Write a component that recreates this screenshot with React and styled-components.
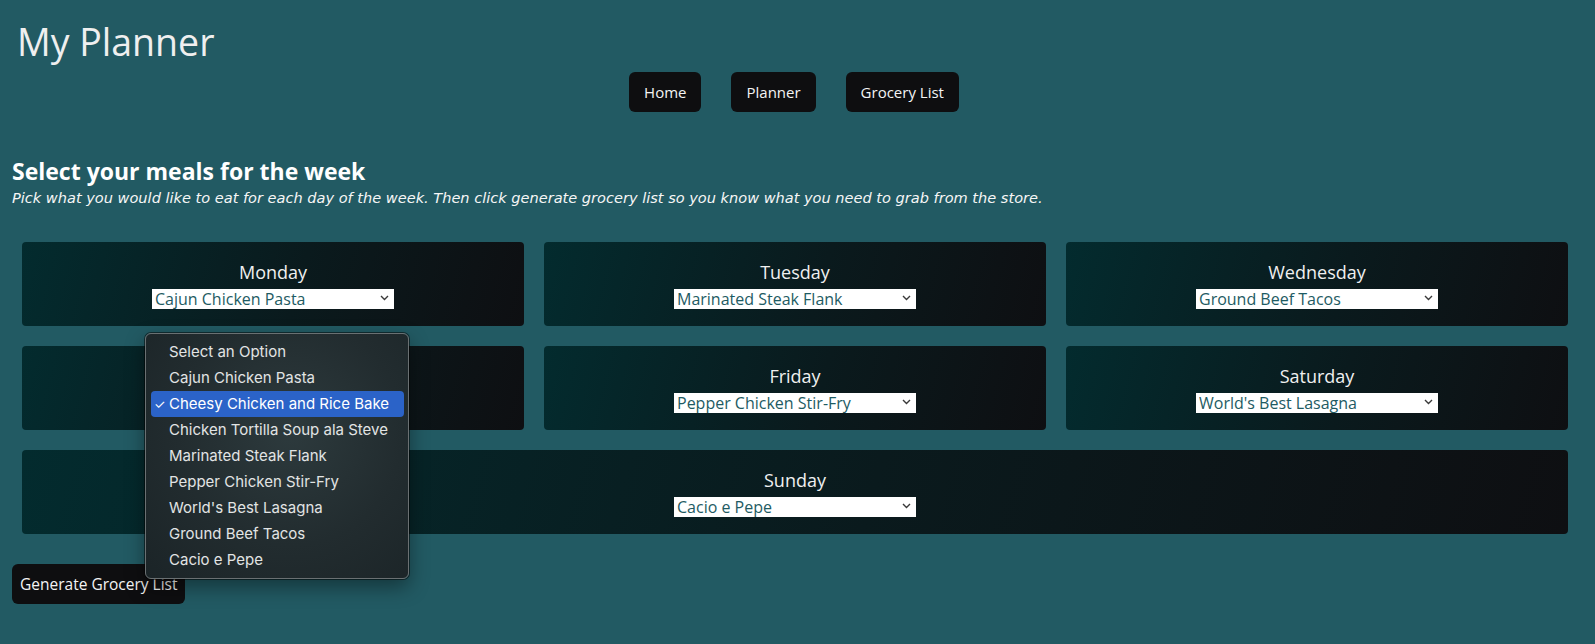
import React from "react"
import styled, { createGlobalStyle } from "styled-components"

const GlobalStyle = createGlobalStyle`
  html, body {
    margin: 0;
    padding: 0;
    background: #225a63;
  }
  body {
    font-family: "Open Sans", "DejaVu Sans", sans-serif;
    color: #f2f2f2;
  }
`

const Page = styled.div`
  position: relative;
  min-height: 644px;
  padding: 18px 12px 0 12px;
  box-sizing: border-box;
`

const Title = styled.h1`
  margin: 0 0 0 5px;
  font-size: 37.5px;
  line-height: 48px;
  font-weight: 400;
  color: #efefef;
`

const Nav = styled.nav`
  display: flex;
  justify-content: center;
  gap: 30px;
  margin-top: 6px;
  padding-right: 7px;
`

const DarkButton = styled.button`
  height: 40px;
  padding: 0 ${props => props.$pad || 15}px;
  border: none;
  border-radius: 6px;
  background: #0e0e10;
  color: #f4f4f4;
  font-family: inherit;
  font-size: ${props => props.$size || 15}px;
  cursor: pointer;
`

const Heading = styled.h2`
  margin: 44px 0 0;
  font-size: 23px;
  line-height: 30px;
  font-weight: 700;
  color: #ffffff;
`

const Subtitle = styled.p`
  margin: 2px 0 0;
  font-family: "DejaVu Sans", sans-serif;
  font-size: 14.55px;
  line-height: 20px;
  font-style: italic;
  color: #f6f6f6;
`

const Grid = styled.div`
  display: grid;
  grid-template-columns: repeat(3, 1fr);
  gap: 20px;
  margin: 34px 15px 0 10px;
`

const Card = styled.div`
  position: relative;
  grid-column: ${props => props.$wide ? "1 / -1" : "auto"};
  display: flex;
  flex-direction: column;
  align-items: center;
  padding: 18px 0 18px;
  border-radius: 4px;
  background: linear-gradient(105deg, #032b2e 0%, #0a1a1d 55%, #0e0f12 100%);
`

const DayLabel = styled.div`
  font-size: 18px;
  line-height: 24px;
  color: #f0f0f0;
`

const SelectWrap = styled.div`
  position: relative;
  width: 242px;
  height: 20px;
  margin-top: 4px;
`

const Select = styled.select`
  appearance: none;
  width: 100%;
  height: 20px;
  margin: 0;
  padding: 0 0 0 3px;
  border: none;
  border-radius: 0;
  background: #ffffff;
  color: #1e5b63;
  font-family: inherit;
  font-size: 16px;
  line-height: 20px;
  outline: none;
`

const Chevron = styled.svg`
  position: absolute;
  right: 5px;
  top: 7px;
  pointer-events: none;
`

const Popup = styled.div`
  position: absolute;
  left: -7px;
  top: -59px;
  width: 264px;
  padding: 5px 4px 5px 5px;
  box-sizing: border-box;
  border: 1px solid #6a7072;
  border-radius: 6px;
  background: radial-gradient(ellipse at 55% 40%, #2d3a3d 0%, #222c2f 55%, #1b2427 100%);
  box-shadow: 0 0 0 1px rgba(0, 0, 0, 0.5), 0 8px 20px rgba(0, 0, 0, 0.4);
  z-index: 10;
`

const Option = styled.div`
  position: relative;
  height: 26px;
  padding-left: 18px;
  border-radius: 4px;
  background: ${props => props.$active ? "#2b63c8" : "transparent"};
  color: ${props => props.$active ? "#ffffff" : "#e2e4e4"};
  font-family: "Inter", "Liberation Sans", sans-serif;
  font-size: 15px;
  line-height: 26px;
  white-space: nowrap;
`

const Check = styled.span`
  position: absolute;
  left: 3px;
  top: 0;
  font-size: 13px;
`

const Footer = styled.div`
  margin-top: 30px;
`

const meals = [
  "Select an Option",
  "Cajun Chicken Pasta",
  "Cheesy Chicken and Rice Bake",
  "Chicken Tortilla Soup ala Steve",
  "Marinated Steak Flank",
  "Pepper Chicken Stir-Fry",
  "World's Best Lasagna",
  "Ground Beef Tacos",
  "Cacio e Pepe",
]

const week = [
  { day: "Monday", meal: "Cajun Chicken Pasta" },
  { day: "Tuesday", meal: "Marinated Steak Flank" },
  { day: "Wednesday", meal: "Ground Beef Tacos" },
  { day: "Thursday", meal: "Cheesy Chicken and Rice Bake", open: true },
  { day: "Friday", meal: "Pepper Chicken Stir-Fry" },
  { day: "Saturday", meal: "World's Best Lasagna" },
  { day: "Sunday", meal: "Cacio e Pepe", wide: true },
]

function MealSelect({ value, open }) {
  return (
    <SelectWrap>
      <Select defaultValue={value}>
        {meals.map(m => <option key={m} value={m}>{m}</option>)}
      </Select>
      <Chevron width="9" height="6" viewBox="0 0 9 6">
        <path d="M1 1l3.5 3.5L8 1" fill="none" stroke="#3a3a3a" strokeWidth="1.4" />
      </Chevron>
      {open && (
        <Popup>
          {meals.map(m => (
            <Option key={m} $active={m === value}>
              {m === value && <Check>✓</Check>}
              {m}
            </Option>
          ))}
        </Popup>
      )}
    </SelectWrap>
  )
}

export default function App() {
  return (
    <>
      <GlobalStyle />
      <Page>
        <Title>My Planner</Title>
        <Nav>
          <DarkButton>Home</DarkButton>
          <DarkButton>Planner</DarkButton>
          <DarkButton>Grocery List</DarkButton>
        </Nav>
        <Heading>Select your meals for the week</Heading>
        <Subtitle>Pick what you would like to eat for each day of the week. Then click generate grocery list so you know what you need to grab from the store.</Subtitle>
        <Grid>
          {week.map(d => (
            <Card key={d.day} $wide={d.wide}>
              <DayLabel>{d.day}</DayLabel>
              <MealSelect value={d.meal} open={d.open} />
            </Card>
          ))}
        </Grid>
        <Footer>
          <DarkButton $pad={8} $size={15.5}>Generate Grocery List</DarkButton>
        </Footer>
      </Page>
    </>
  )
}
